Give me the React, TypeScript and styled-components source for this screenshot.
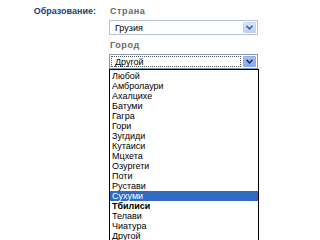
import styled, { createGlobalStyle } from "styled-components";

const GlobalStyle = createGlobalStyle`
  html, body {
    margin: 0;
    padding: 0;
    background: #ffffff;
    overflow: hidden;
  }
  body {
    font-family: "Liberation Sans", Arial, sans-serif;
  }
`;

const CITIES = [
  "Любой",
  "Амбролаури",
  "Ахалцихе",
  "Батуми",
  "Гагра",
  "Гори",
  "Зугдиди",
  "Кутаиси",
  "Мцхета",
  "Озургети",
  "Поти",
  "Рустави",
  "Сухуми",
  "Тбилиси",
  "Телави",
  "Чиатура",
  "Другой",
];

const Form = styled.div`
  display: grid;
  grid-template-columns: 96px 149px;
  column-gap: 13px;
  padding-top: 5px;
`;

const RowLabel = styled.div`
  text-align: right;
  font-size: 9px;
  font-weight: 700;
  color: #1d3f7a;
  line-height: 12px;
`;

const Fields = styled.div`
  display: flex;
  flex-direction: column;
`;

const FieldLabel = styled.div`
  font-size: 9px;
  font-weight: 700;
  color: #6a6a6a;
  letter-spacing: 0.6px;
  line-height: 12px;
  padding-left: 1px;
`;

const SelectBox = styled.div<{ $focused?: boolean }>`
  display: flex;
  align-items: center;
  height: 15px;
  box-sizing: border-box;
  border: 1px solid ${({ $focused }) => ($focused ? "#7f9db9" : "#b7c3d3")};
  background: #fff;
  margin-top: 3px;
  margin-bottom: ${({ $focused }) => ($focused ? "0" : "4px")};
  padding: 1px;
`;

const SelectValue = styled.div<{ $focused?: boolean }>`
  flex: 1;
  height: 11px;
  box-sizing: border-box;
  font-size: 9px;
  line-height: 10px;
  color: #000;
  padding-left: 3px;
  border: 1px ${({ $focused }) => ($focused ? "dotted #555" : "solid transparent")};
  margin-right: 2px;
`;

const ArrowButton = styled.div<{ $pressed?: boolean }>`
  width: 13px;
  height: 11px;
  box-sizing: border-box;
  border: 1px solid ${({ $pressed }) => ($pressed ? "#8fa9e6" : "#c3d3f5")};
  border-radius: 1px;
  background: ${({ $pressed }) =>
    $pressed ? "linear-gradient(#a9c0f5, #8aa8ee)" : "linear-gradient(#dbe6fd, #bccefa)"};
  display: flex;
  align-items: center;
  justify-content: center;

  svg {
    width: 7px;
    height: 5px;
  }
`;

const List = styled.ul`
  list-style: none;
  margin: 0;
  padding: 1px 0 0;
  border: 1px solid #000;
  width: 150px;
  box-sizing: border-box;
  background: #fff;
`;

const Item = styled.li<{ $selected?: boolean; $bold?: boolean }>`
  height: 10px;
  font-size: 9px;
  line-height: 10px;
  padding-left: 2px;
  color: ${({ $selected }) => ($selected ? "#fff" : "#000")};
  background: ${({ $selected }) => ($selected ? "#316ac5" : "transparent")};
  font-weight: ${({ $bold }) => ($bold ? 700 : 400)};
`;

const Chevron = ({ color }: { color: string }) => (
  <svg viewBox="0 0 7 5">
    <path d="M0.5 0.8 L3.5 3.8 L6.5 0.8" fill="none" stroke={color} strokeWidth="1.6" />
  </svg>
);

export default function App() {
  return (
    <>
      <GlobalStyle />
      <Form>
        <RowLabel>Образование:</RowLabel>
        <Fields>
          <FieldLabel>Страна</FieldLabel>
          <SelectBox>
            <SelectValue>Грузия</SelectValue>
            <ArrowButton>
              <Chevron color="#4d6185" />
            </ArrowButton>
          </SelectBox>
          <FieldLabel>Город</FieldLabel>
          <SelectBox $focused>
            <SelectValue $focused>Другой</SelectValue>
            <ArrowButton $pressed>
              <Chevron color="#25365e" />
            </ArrowButton>
          </SelectBox>
          <List>
            {CITIES.map((city) => (
              <Item key={city} $selected={city === "Сухуми"} $bold={city === "Тбилиси"}>
                {city}
              </Item>
            ))}
          </List>
        </Fields>
      </Form>
    </>
  );
}
